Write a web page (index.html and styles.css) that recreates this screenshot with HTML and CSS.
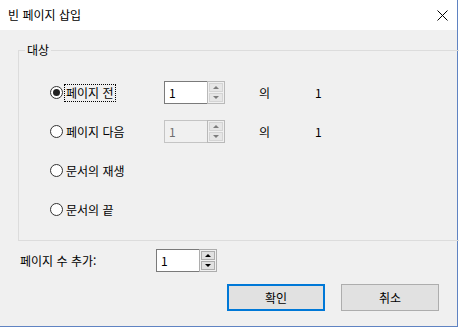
FILE: index.html
```html
<!DOCTYPE html>
<html lang="ko">
<head>
<meta charset="utf-8">
<title>빈 페이지 삽입</title>
<link rel="stylesheet" href="styles.css">
</head>
<body>
<div class="window">
  <div class="titlebar">
    <span class="title">빈 페이지 삽입</span>
    <svg class="close" width="11" height="11" viewBox="0 0 11 11"><path d="M0.5 0.5 L10.5 10.5 M10.5 0.5 L0.5 10.5" stroke="#000" stroke-width="1" fill="none"/></svg>
  </div>
  <div class="content">
    <div class="group">
      <span class="legend">대상</span>
      <div class="row">
        <div class="opt"><span class="radio checked"><span class="dot"></span></span><span class="lbl focus">페이지 전</span></div>
        <div class="spin">
          <div class="field">1</div>
          <div class="btns"><span class="sb"><span class="up"></span></span><span class="sb"><span class="down"></span></span></div>
        </div>
        <span class="of">의</span>
        <span class="total">1</span>
      </div>
      <div class="row">
        <div class="opt"><span class="radio"></span><span class="lbl">페이지 다음</span></div>
        <div class="spin disabled">
          <div class="field">1</div>
          <div class="btns"><span class="sb"><span class="up"></span></span><span class="sb"><span class="down"></span></span></div>
        </div>
        <span class="of">의</span>
        <span class="total">1</span>
      </div>
      <div class="row">
        <div class="opt"><span class="radio"></span><span class="lbl">문서의 재생</span></div>
      </div>
      <div class="row">
        <div class="opt"><span class="radio"></span><span class="lbl">문서의 끝</span></div>
      </div>
    </div>
    <div class="count-row">
      <span class="count-label">페이지 수 추가:</span>
      <div class="spin active">
        <div class="field">1</div>
        <div class="btns"><span class="sb"><span class="up"></span></span><span class="sb"><span class="down"></span></span></div>
      </div>
    </div>
    <div class="actions">
      <button class="btn default">확인</button>
      <button class="btn">취소</button>
    </div>
  </div>
</div>
</body>
</html>
```
FILE: styles.css
```css
html, body {
  margin: 0;
  padding: 0;
  background: #fff;
}
body {
  font-family: "Noto Sans CJK KR", "Noto Sans", sans-serif;
  font-size: 12px;
  color: #000;
}
.window {
  width: 457px;
  height: 326px;
  border-right: 1px solid #5f83c2;
  border-bottom: 1px solid #5f83c2;
  display: flex;
  flex-direction: column;
}
.titlebar {
  height: 30px;
  background: #fff;
  display: flex;
  align-items: center;
  justify-content: space-between;
  padding: 0 9px 0 8px;
}
.title {
  line-height: 14px;
}
.close {
  display: block;
}
.content {
  flex: 1;
  background: #f0f0f0;
  display: flex;
  flex-direction: column;
}
.group {
  position: relative;
  margin: 20px 0 0 18px;
  width: 422px;
  border: 1px solid #dcdcdc;
  padding: 30px 0 19px 31px;
  display: flex;
  flex-direction: column;
  gap: 16px;
}
.legend {
  position: absolute;
  top: -8px;
  left: 6px;
  padding: 0 2px;
  line-height: 14px;
  background: #f0f0f0;
}
.row {
  height: 23px;
  display: flex;
  align-items: center;
}
.opt {
  width: 114px;
  display: flex;
  align-items: center;
}
.radio {
  width: 11px;
  height: 11px;
  border: 1px solid #333;
  border-radius: 50%;
  background: #fff;
  display: flex;
  align-items: center;
  justify-content: center;
  flex: none;
}
.dot {
  width: 7px;
  height: 7px;
  border-radius: 50%;
  background: #222;
}
.lbl {
  margin-left: 1px;
  padding: 0 1px;
  line-height: 16px;
  border: 1px solid transparent;
}
.lbl.focus {
  border: 1px dotted #000;
}
.spin {
  width: 61px;
  height: 23px;
  display: flex;
}
.field {
  width: 39px;
  border: 1px solid #7a7a7a;
  border-right: none;
  background: #fff;
  padding-left: 4px;
  line-height: 21px;
}
.btns {
  width: 16px;
  border: 1px solid #b9b9b9;
  padding: 1px 0 1px 0;
  display: flex;
  flex-direction: column;
  gap: 1px;
}
.sb {
  flex: 1;
  margin: 0 1px;
  background: #e6e6e6;
  border: 1px solid #d4d4d4;
  display: flex;
  align-items: center;
  justify-content: center;
}
.up {
  width: 0;
  height: 0;
  border-left: 3px solid transparent;
  border-right: 3px solid transparent;
  border-bottom: 3px solid #7d7d7d;
}
.down {
  width: 0;
  height: 0;
  border-left: 3px solid transparent;
  border-right: 3px solid transparent;
  border-top: 3px solid #7d7d7d;
}
.disabled .field {
  border-color: #c4c4c4;
  background: #f0f0f0;
  color: #6d6d6d;
}
.active .btns {
  border-color: #adadad;
}
.active .sb {
  background: #e1e1e1;
  border-color: #adadad;
}
.active .up {
  border-bottom-color: #000;
}
.active .down {
  border-top-color: #000;
}
.of {
  margin-left: 34px;
  width: 56px;
}
.count-row {
  margin: 8px 0 0 20px;
  height: 23px;
  display: flex;
  align-items: center;
}
.count-label {
  width: 136px;
}
.actions {
  margin: 12px 18px 0 0;
  display: flex;
  justify-content: flex-end;
  gap: 16px;
}
.btn {
  width: 98px;
  height: 27px;
  background: #e1e1e1;
  border: 1px solid #adadad;
  font-family: inherit;
  font-size: 12px;
  color: #000;
  padding: 0;
  margin: 0;
}
.btn.default {
  border: 2px solid #0078d7;
}
```
